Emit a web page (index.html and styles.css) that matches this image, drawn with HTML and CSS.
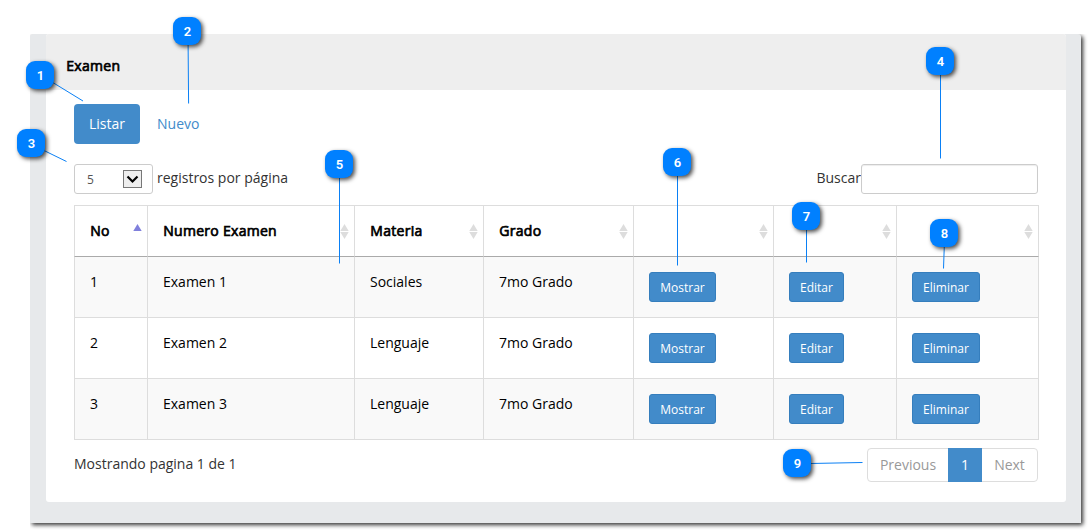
FILE: index.html
```html
<!DOCTYPE html>
<html lang="es">
<head>
<meta charset="utf-8">
<title>Examen</title>
<link rel="stylesheet" href="styles.css">
</head>
<body>
<svg class="defs" width="0" height="0" aria-hidden="true">
  <symbol id="sort" viewBox="0 0 9 16"><path d="M4.500 1 8.700 8H.3zM.3 9h8.400l-4.200 7z"/></symbol>
</svg>
<div class="frame">
  <main class="panel">
    <header class="panel-head"><span class="strong">Examen</span></header>
    <div class="panel-body">
      <nav class="tabs"><a class="tab active">Listar</a><a class="tab">Nuevo</a></nav>
      <div class="controls">
        <label class="length"><span class="select"><span>5</span><span class="drop"><svg width="13" height="9" viewBox="0 0 13 9"><path d="M1.5 1.5 6.5 6.5 11.5 1.5"/></svg></span></span>registros por página</label>
        <label class="search">Buscar<input class="field" type="text"></label>
      </div>
      <table class="grid">
        <colgroup><col class="c1"><col class="c2"><col class="c3"><col class="c4"><col class="c5"><col class="c6"><col class="c7"></colgroup>
        <thead><tr>
          <th><div class="th"><span class="strong">No</span><svg class="asc" width="9" height="16" viewBox="0 0 9 16"><path d="M4.500 1 8.700 8H.3z"/></svg></div></th>
          <th><div class="th"><span class="strong">Numero Examen</span><svg class="sort" width="9" height="16"><use href="#sort"/></svg></div></th>
          <th><div class="th"><span class="strong">Materia</span><svg class="sort" width="9" height="16"><use href="#sort"/></svg></div></th>
          <th><div class="th"><span class="strong">Grado</span><svg class="sort" width="9" height="16"><use href="#sort"/></svg></div></th>
          <th><div class="th"><span></span><svg class="sort" width="9" height="16"><use href="#sort"/></svg></div></th>
          <th><div class="th"><span></span><svg class="sort" width="9" height="16"><use href="#sort"/></svg></div></th>
          <th><div class="th"><span></span><svg class="sort" width="9" height="16"><use href="#sort"/></svg></div></th>
        </tr></thead>
        <tbody>
          <tr><td>1</td><td>Examen 1</td><td>Sociales</td><td>7mo Grado</td><td><a class="btn show">Mostrar</a></td><td><a class="btn edit">Editar</a></td><td><a class="btn remove">Eliminar</a></td></tr>
          <tr><td>2</td><td>Examen 2</td><td>Lenguaje</td><td>7mo Grado</td><td><a class="btn show">Mostrar</a></td><td><a class="btn edit">Editar</a></td><td><a class="btn remove">Eliminar</a></td></tr>
          <tr><td>3</td><td>Examen 3</td><td>Lenguaje</td><td>7mo Grado</td><td><a class="btn show">Mostrar</a></td><td><a class="btn edit">Editar</a></td><td><a class="btn remove">Eliminar</a></td></tr>
        </tbody>
      </table>
      <footer class="foot">
        <span class="info">Mostrando pagina 1 de 1</span>
        <div class="pager"><a class="prev">Previous</a><a class="current">1</a><a class="next">Next</a></div>
      </footer>
    </div>
  </main>
</div>
<svg class="leaders" width="1090" height="532" viewBox="0 0 1090 532" aria-hidden="true">
  <path d="M52 82 83 101M188.1 44 188.6 103.500M44 150.500 66.500 161.500M940.500 74V158.500M339.500 177V263.500M677.500 175V265.500M806.500 229V262.500M944.300 246 943.500 268.500M810 463.500 862.500 462.500"/>
</svg>
<span class="badge b1">1</span>
<span class="badge b2">2</span>
<span class="badge b3">3</span>
<span class="badge b4">4</span>
<span class="badge b5">5</span>
<span class="badge b6">6</span>
<span class="badge b7">7</span>
<span class="badge b8">8</span>
<span class="badge b9">9</span>
</body>
</html>
```
FILE: styles.css
```css
* { box-sizing: border-box; }
body { margin: 0; width: 1090px; height: 532px; padding: 34px 0 0 30px; overflow: hidden; position: relative; background: #fff; color: #333; font: 14px/20px "Open Sans", sans-serif; }
.defs { position: absolute; }
.frame { width: 1051px; height: 489px; padding: 0 15px 21px 16px; background: #e7e9eb; border-radius: 3px 3px 0 0; box-shadow: 2px 2px 4px rgba(0,0,0,.8); clip-path: inset(0 -10px -10px 0); }
.panel { height: 468px; background: #fff; border-radius: 3px; overflow: hidden; }
.panel-head { height: 56px; padding: 22px 20px 0; background: #eee; color: #000; }
.panel-body { padding: 14px 27px 0 28px; }
.tabs { display: flex; gap: 2px; height: 40px; }
.tab { height: 40px; padding: 10px 15px; border-radius: 4px; color: #428bca; }
.tab.active { width: 66px; background: #428bca; color: #fff; }
.controls { display: flex; justify-content: space-between; margin-top: 20px; height: 41px; }
.length, .search { display: flex; height: 30px; line-height: 28px; }
.length { gap: 4px; }
.search { margin-right: 1px; }
.select { display: flex; align-items: center; justify-content: space-between; width: 79px; height: 30px; padding: 2px 10px 0 12px; border: 1px solid #ccc; border-radius: 3px; font-size: 12px; color: #555; }
.drop { display: flex; align-items: center; justify-content: center; width: 19px; height: 18px; margin-top: -2px; border: 1px solid #777; background: #eee; }
.drop path { fill: none; stroke: #000; stroke-width: 2.2; }
.field { width: 177px; height: 30px; border: 1px solid #ccc; border-radius: 3px; background: #fff; box-shadow: inset 0 1px 1px rgba(0,0,0,.075); }
.grid { width: 965px; table-layout: fixed; border-collapse: separate; border-spacing: 0; color: #000; }
.c1 { width: 73px; }
.c2 { width: 207px; }
.c3 { width: 129px; }
.c4 { width: 150px; }
.c5 { width: 140px; }
.c6 { width: 123px; }
.c7 { width: 143px; }
.grid th { height: 52px; padding: 0; border: solid #ddd; border-width: 1px 0 1px 1px; border-bottom-color: #aaa; font-weight: 400; text-align: left; }
.grid td { height: 61px; padding: 15px 15px 0; border: solid #ddd; border-width: 0 0 1px 1px; vertical-align: top; }
.grid th:last-child, .grid td:last-child { border-right-width: 1px; }
.grid tbody tr:nth-child(odd) { background: #f9f9f9; }
.th { display: flex; align-items: center; justify-content: space-between; padding: 0 5px 0 15px; height: 50px; }
.strong { padding-left: .3px; letter-spacing: .28px; -webkit-text-stroke: .7px #000; }
.sort { fill: #ddd; }
.asc { fill: #8080dc; }
.btn { display: flex; height: 30px; justify-content: center; border: 1px solid #357ebd; border-radius: 3px; background: #428bca; color: #fff; font-size: 12px; line-height: 29px; }
.show { width: 67px; }
.edit { width: 55px; }
.remove { width: 68px; }
.foot { display: flex; justify-content: space-between; margin-top: 8px; }
.info { padding-top: 6px; }
.pager { display: flex; width: 171px; height: 34px; margin-right: 1px; border: 1px solid #ddd; border-radius: 4px; color: #999; text-align: center; line-height: 32px; }
.prev { width: 80px; }
.current { width: 34px; height: 34px; margin-top: -1px; background: #428bca; color: #fff; line-height: 34px; }
.next { width: 55px; }
.leaders { position: absolute; left: 0; top: 0; pointer-events: none; fill: none; stroke: #0a80f5; }
.badge { position: absolute; width: 28px; height: 28px; padding-left: 1px; border-radius: 9px; background: #0080ff; color: #fff; box-shadow: 2px 2px 4px rgba(0,0,0,.7); font: 600 13px/29px Roboto, sans-serif; text-align: center; }
.b1 { left: 26px; top: 61px; }
.b2 { left: 173px; top: 17px; }
.b3 { left: 17px; top: 129px; }
.b4 { left: 926px; top: 47px; }
.b5 { left: 325px; top: 150px; }
.b6 { left: 663px; top: 148px; }
.b7 { left: 792px; top: 202px; }
.b8 { left: 930px; top: 219px; }
.b9 { left: 783px; top: 449px; }
```
